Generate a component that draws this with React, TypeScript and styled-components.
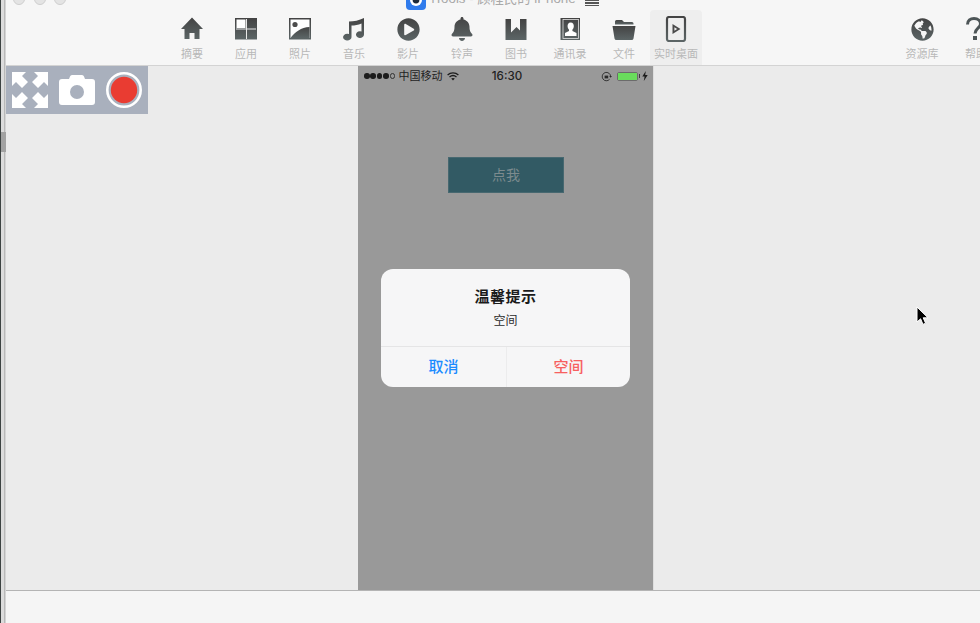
import React from "react";
import styled, { createGlobalStyle } from "styled-components";
import { FaBell, FaGlobeAmericas, FaPlayCircle } from "react-icons/fa";

const GlobalStyle = createGlobalStyle`
  html, body { margin: 0; padding: 0; height: 100%; overflow: hidden; }
  body { font-family: "Liberation Sans", "Noto Sans CJK SC", sans-serif; background: #f6f6f6; }
`;

const FONT = `"Liberation Sans", "Noto Sans CJK SC", sans-serif`;

const Shell = styled.div`
  position: relative;
  display: flex;
  width: 980px;
  height: 623px;
  overflow: hidden;
`;
const EdgeStrip = styled.div`
  flex: 0 0 6px;
  background: linear-gradient(90deg, #3d4342 0 1px, #dcdcdc 1px 4px, #b8b8b8 4px 5px, #d4d4d4 5px 6px);
`;
const EdgeThumb = styled.div`
  width: 5px;
  height: 20px;
  margin: 132px 0 0 1px;
  background: #a2a2a2;
`;
const Window = styled.div`
  flex: 1;
  min-width: 0;
  display: flex;
  flex-direction: column;
`;
const Header = styled.header`
  flex: 0 0 66px;
  box-sizing: border-box;
  background: #f6f6f6;
  border-bottom: 1px solid #d3d3d3;
`;
const TitleBar = styled.div`
  height: 10px;
  display: flex;
  overflow: hidden;
`;
const Lights = styled.div`
  display: flex;
  gap: 8.5px;
  margin: -7px 0 0 7px;
`;
const Light = styled.span`
  box-sizing: border-box;
  width: 12px;
  height: 12px;
  border-radius: 50%;
  background: #e4e4e4;
  border: 1px solid #cfcfcf;
`;
const TitleGroup = styled.div`
  display: flex;
  align-items: flex-start;
  margin: -10px 0 0 339.5px;
`;
const AppLogo = styled.div`
  width: 20px;
  height: 20px;
  border-radius: 4px;
  background: #2f7bec;
  display: flex;
  align-items: center;
  justify-content: center;
`;
const TitleText = styled.span`
  margin-left: 6px;
  font: 13.3px/17px ${FONT};
  color: #a8a8a8;
  white-space: nowrap;
`;
const TitleMenu = styled.span`
  flex: 0 0 14px;
  height: 6px;
  margin: 10px 0 0 9px;
  background: repeating-linear-gradient(180deg, #555 0 1.4px, transparent 1.4px 2.4px);
`;
const Toolbar = styled.nav`
  display: flex;
  padding-left: 159px;
  height: 55px;
  width: 900px;
`;
const ToolItem = styled.div<{ $active?: boolean }>`
  flex: 0 0 ${(p) => (p.$active ? "52px" : "54px")};
  margin-left: ${(p) => (p.$active ? "-1px" : "0")};
  box-sizing: border-box;
  padding-top: 6px;
  display: flex;
  flex-direction: column;
  align-items: center;
  background: ${(p) => (p.$active ? "#eeeeee" : "transparent")};
  border-radius: 4px 4px 0 0;
`;
const IconBox = styled.div`
  height: 26px;
  display: flex;
  align-items: center;
  justify-content: center;
`;
const ToolLabel = styled.span`
  margin-top: 5px;
  font: 11px/14px ${FONT};
  color: #b8b8b8;
  white-space: nowrap;
`;
const RightGap = styled.div`
  flex: 0 0 193px;
`;
const Main = styled.main`
  position: relative;
  flex: 1;
  min-height: 0;
  display: flex;
  padding-left: 352px;
  background: #ebebeb;
`;
const FloatPanel = styled.div`
  position: absolute;
  left: 0;
  top: 0;
  width: 142px;
  height: 48px;
  display: flex;
  align-items: center;
  box-sizing: border-box;
  padding-left: 6px;
  gap: 11px;
  background: #a9b0bd;
`;
const Phone = styled.section`
  position: relative;
  box-sizing: content-box;
  width: 295px;
  display: flex;
  flex-direction: column;
  background: #999999;
  border-right: 1px solid #dedede;
`;
const StatusBar = styled.div`
  height: 20px;
  display: grid;
  grid-template-columns: 1fr auto 1fr;
  align-items: center;
  padding: 0 5px 0 6px;
  color: #1f1f1f;
`;
const StatusLeft = styled.div`
  display: flex;
  align-items: center;
`;
const StatusRight = styled.div`
  display: flex;
  align-items: center;
  justify-content: flex-end;
`;
const Dot = styled.span<{ $empty?: boolean }>`
  box-sizing: border-box;
  width: 5.6px;
  height: 5.6px;
  margin-right: 0.8px;
  border-radius: 50%;
  background: ${(p) => (p.$empty ? "transparent" : "#1c1c1c")};
  border: ${(p) => (p.$empty ? "0.8px solid #333" : "none")};
`;
const Carrier = styled.span`
  margin: 0 5px 0 2.5px;
  font: 11px/14px ${FONT};
  white-space: nowrap;
`;
const Clock = styled.span`
  margin-left: 2px;
  font: 500 11.6px/14px "Inter", ${FONT};
`;
const Battery = styled.div`
  position: relative;
  box-sizing: border-box;
  width: 21px;
  height: 9px;
  margin: 0 4px 0 5px;
  border: 1px solid #6b6b6b;
  border-radius: 2px;
  &::before {
    content: "";
    display: block;
    height: 100%;
    background: #69dc5c;
  }
  &::after {
    content: "";
    position: absolute;
    right: -3px;
    top: 1.5px;
    width: 1.5px;
    height: 4px;
    background: #3a3a3a;
  }
`;
const TapButton = styled.div`
  box-sizing: border-box;
  width: 116px;
  height: 36px;
  margin: 71px 0 0 90px;
  display: flex;
  align-items: center;
  justify-content: center;
  background: #325a64;
  border: 1px solid #476870;
  font: 14px/18px ${FONT};
  color: #7c8b8e;
`;
const Alert = styled.div`
  position: absolute;
  left: 23px;
  top: 203px;
  width: 249px;
  height: 118px;
  display: flex;
  flex-direction: column;
  border-radius: 12px;
  background: #f6f6f7;
  overflow: hidden;
`;
const AlertBody = styled.div`
  flex: 0 0 78px;
  display: flex;
  flex-direction: column;
  align-items: center;
  padding-top: 18px;
  box-sizing: border-box;
  border-bottom: 1px solid #e5e5e6;
`;
const AlertTitle = styled.div`
  font: 700 15px/20px ${FONT};
  letter-spacing: 0.5px;
  color: #1b1b1b;
`;
const AlertText = styled.div`
  margin-top: 6px;
  font: 12px/16px ${FONT};
  color: #2a2a2a;
`;
const AlertActions = styled.div`
  flex: 1;
  display: grid;
  grid-template-columns: 126px 1fr;
`;
const AlertAction = styled.div<{ $color: string; $divider?: boolean }>`
  display: flex;
  align-items: center;
  justify-content: center;
  font: 500 15px/20px ${FONT};
  color: ${(p) => p.$color};
  border-right: ${(p) => (p.$divider ? "1px solid #ececed" : "none")};
`;
const BottomBar = styled.footer`
  flex: 0 0 33px;
  box-sizing: border-box;
  background: #f5f5f5;
  border-top: 1px solid #b4b4b4;
`;
const Cursor = styled.svg`
  position: absolute;
  left: 915px;
  top: 305px;
`;
const Defs = styled.svg`
  position: absolute;
  width: 0;
  height: 0;
`;

const INK = "url(#iconInk)";
const Svg = ({ children, w = 24, h = 24 }: { children: React.ReactNode; w?: number; h?: number }) => (
  <svg width={w} height={h} viewBox={`0 0 ${w} ${h}`}>
    {children}
  </svg>
);

const HomeIcon = () => (
  <Svg>
    <path fill={INK} d="M12 0.5 L23 12 H19.5 V22 H14.5 V16 H9.5 V22 H4.5 V12 H1 Z" />
  </Svg>
);
const AppsIcon = () => (
  <Svg>
    <rect x="1" y="1" width="22" height="21.5" fill={INK} />
    <rect x="2.5" y="2.5" width="9" height="8.5" fill="#fff" />
    <rect x="12" y="2" width="1" height="20" fill="#e8e8e8" />
    <rect x="2" y="11.5" width="20" height="1" fill="#e8e8e8" />
  </Svg>
);
const PhotoIcon = () => (
  <Svg>
    <rect x="1" y="1" width="22" height="21.5" fill={INK} />
    <rect x="2.5" y="2.5" width="19" height="18.5" fill="#fff" />
    <circle cx="7" cy="7.5" r="2.6" fill="#4c4c4c" />
    <path fill={INK} d="M2.5 21 C7 15 13 10.5 21.5 10 V21 Z" />
  </Svg>
);
const MusicIcon = () => (
  <Svg>
    <path
      fill={INK}
      d="M7 4.5 C12 4.5 17 3.5 22 1 V17.5 A4 3.4 0 1 1 19.5 14.4 V6.5 C16 8 13 8.5 9.5 8.6 V20 A4.2 3.4 0 1 1 7 17 Z"
    />
  </Svg>
);
const BookIcon = () => (
  <Svg>
    <path
      fill={INK}
      d="M1.5 2 H7 V15.5 L12.5 10 L16 13.5 V2 H22.5 V23 H1.5 Z"
    />
  </Svg>
);
const ContactIcon = () => (
  <Svg>
    <rect x="2.5" y="1" width="19.5" height="22" fill={INK} />
    <rect x="5" y="2.5" width="15.5" height="19" fill="none" stroke="#e2e2e2" strokeWidth="0.8" />
    <path
      fill="#fff"
      d="M12.7 5.5 C15 5.5 16 7.5 15.8 9.5 C15.7 11 15 12 14.4 12.7 V14 L18.5 16 V19 H7 V16 L11 14 V12.7 C10.4 12 9.7 11 9.6 9.5 C9.4 7.5 10.4 5.5 12.7 5.5 Z"
    />
  </Svg>
);
const FolderIcon = () => (
  <Svg>
    <path fill={INK} d="M3 6 V4.5 Q3 3 4.5 3 H10 L12 5 H20 Q21.5 5 21.5 6.5 V7.5 H3 Z" />
    <path fill={INK} d="M0.5 9 H23.5 L21.5 21.5 Q21.3 23 19.5 23 H4.5 Q2.7 23 2.5 21.5 Z" />
  </Svg>
);
const DesktopIcon = () => (
  <Svg w={22} h={26}>
    <rect x="2" y="1" width="18" height="24" rx="2" fill="none" stroke={INK} strokeWidth="2.2" />
    <path fill="#4a4a4a" d="M7.5 8 L15.5 13 L7.5 18 Z M9.4 11.2 V14.8 L12.2 13 Z" fillRule="evenodd" />
  </Svg>
);
const HelpIcon = () => (
  <Svg>
    <path fill="none" stroke="#4d5557" strokeWidth="3" d="M3.5 7.5 C3.5 3.5 6.5 1.5 10 1.5 C14 1.5 16.5 4 16.5 7 C16.5 11 11 11.5 11 16.5" />
    <rect x="9" y="19" width="4" height="4" fill="#4d5557" />
  </Svg>
);

const ExpandIcon = () => {
  const arrow = "M0 0 H14 L10 4 L16 10 L10 16 L4 10 L0 14 Z";
  return (
    <Svg w={36} h={36}>
      <g fill="#fff">
        <path d={arrow} />
        <path d={arrow} transform="translate(36 0) rotate(90)" />
        <path d={arrow} transform="translate(36 36) rotate(180)" />
        <path d={arrow} transform="translate(0 36) rotate(270)" />
      </g>
    </Svg>
  );
};
const CameraIcon = () => (
  <Svg w={36} h={30}>
    <path
      fill="#fff"
      fillRule="evenodd"
      d="M10 4 L11 1.5 Q11.5 0 13 0 H23 Q24.5 0 25 1.5 L26 4 H33 Q36 4 36 7 V27 Q36 30 33 30 H3 Q0 30 0 27 V7 Q0 4 3 4 Z M18 10 A7 7 0 1 0 18 24 A7 7 0 1 0 18 10 Z"
    />
  </Svg>
);
const RecordIcon = () => (
  <Svg w={36} h={36}>
    <circle cx="18" cy="18" r="16.7" fill="none" stroke="#fff" strokeWidth="2.6" />
    <circle cx="18" cy="18" r="13.2" fill="#e93c32" />
  </Svg>
);

const tools = [
  { label: "摘要", icon: <HomeIcon /> },
  { label: "应用", icon: <AppsIcon /> },
  { label: "照片", icon: <PhotoIcon /> },
  { label: "音乐", icon: <MusicIcon /> },
  { label: "影片", icon: <FaPlayCircle size={23} fill={INK} /> },
  { label: "铃声", icon: <FaBell size={24} fill={INK} /> },
  { label: "图书", icon: <BookIcon /> },
  { label: "通讯录", icon: <ContactIcon /> },
  { label: "文件", icon: <FolderIcon /> },
  { label: "实时桌面", icon: <DesktopIcon />, active: true },
];

export default function App() {
  return (
    <Shell>
      <GlobalStyle />
      <Defs>
        <defs>
          <linearGradient id="iconInk" x1="0" y1="0" x2="0" y2="1">
            <stop offset="0" stopColor="#434343" />
            <stop offset="1" stopColor="#5c6566" />
          </linearGradient>
        </defs>
      </Defs>
      <EdgeStrip>
        <EdgeThumb />
      </EdgeStrip>
      <Window>
        <Header>
          <TitleBar>
            <Lights>
              <Light />
              <Light />
              <Light />
            </Lights>
            <TitleGroup>
              <AppLogo>
                <svg width="14" height="14" viewBox="0 0 14 14">
                  <circle cx="7" cy="7" r="6" fill="#fff" />
                  <circle cx="7" cy="7" r="3.4" fill="#1d2a3a" />
                </svg>
              </AppLogo>
              <TitleText>iTools - 顾程民的 iPhone</TitleText>
              <TitleMenu />
            </TitleGroup>
          </TitleBar>
          <Toolbar>
            {tools.map((t) => (
              <ToolItem key={t.label} $active={t.active}>
                <IconBox>{t.icon}</IconBox>
                <ToolLabel>{t.label}</ToolLabel>
              </ToolItem>
            ))}
            <RightGap />
            <ToolItem>
              <IconBox>
                <FaGlobeAmericas size={23} fill={INK} />
              </IconBox>
              <ToolLabel>资源库</ToolLabel>
            </ToolItem>
            <ToolItem>
              <IconBox>
                <HelpIcon />
              </IconBox>
              <ToolLabel>帮助</ToolLabel>
            </ToolItem>
          </Toolbar>
        </Header>
        <Main>
          <FloatPanel>
            <ExpandIcon />
            <CameraIcon />
            <RecordIcon />
          </FloatPanel>
          <Phone>
            <StatusBar>
              <StatusLeft>
                <Dot />
                <Dot />
                <Dot />
                <Dot />
                <Dot $empty />
                <Carrier>中国移动</Carrier>
                <svg width="12" height="9" viewBox="0 0 12 9">
                  <path
                    fill="none"
                    stroke="#1c1c1c"
                    strokeWidth="1.3"
                    d="M0.6 3 C3.6 0.2 8.4 0.2 11.4 3 M2.5 5 C4.5 3.3 7.5 3.3 9.5 5"
                  />
                  <path fill="#1c1c1c" d="M4.2 6.6 C5.3 5.7 6.7 5.7 7.8 6.6 L6 8.6 Z" />
                </svg>
              </StatusLeft>
              <Clock>16:30</Clock>
              <StatusRight>
                <svg width="11" height="11" viewBox="0 0 11 11">
                  <path
                    fill="none"
                    stroke="#2a2a2a"
                    strokeWidth="0.9"
                    d="M9.6 5.5 A4.2 4.2 0 1 0 8.6 8.3"
                  />
                  <rect x="3.6" y="4.6" width="3.6" height="2.8" fill="#2a2a2a" />
                  <path fill="#2a2a2a" d="M8.2 5 H11 L9.6 6.8 Z" />
                </svg>
                <Battery />
                <svg width="6" height="10" viewBox="0 0 6 10">
                  <path fill="#1c1c1c" d="M3.8 0 L0.3 5.6 H2.6 L1.8 10 L5.7 4 H3.2 Z" />
                </svg>
              </StatusRight>
            </StatusBar>
            <TapButton>点我</TapButton>
            <Alert>
              <AlertBody>
                <AlertTitle>温馨提示</AlertTitle>
                <AlertText>空间</AlertText>
              </AlertBody>
              <AlertActions>
                <AlertAction $color="#1a8cff" $divider>
                  取消
                </AlertAction>
                <AlertAction $color="#f76060">空间</AlertAction>
              </AlertActions>
            </Alert>
          </Phone>
        </Main>
        <BottomBar />
      </Window>
      <Cursor width="16" height="22" viewBox="0 0 16 22">
        <path
          d="M2 2 V17 L5.6 13.8 L8 19.4 L10.6 18.2 L8.2 12.8 H13 Z"
          fill="#000"
          stroke="#fff"
          strokeWidth="1"
        />
      </Cursor>
    </Shell>
  );
}
